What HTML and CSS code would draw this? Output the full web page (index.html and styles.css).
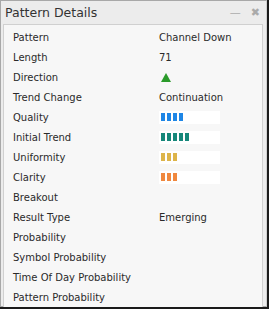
FILE: index.html
```html
<!DOCTYPE html>
<html lang="en">
<head>
	<meta charset="UTF-8">
	<title>Pattern Details</title>
	<link rel="stylesheet" href="styles.css">
</head>
<body>
<div class="window">
	<div class="titlebar">
		<span class="title">Pattern Details</span>
		<span class="btn min">&mdash;</span>
		<span class="btn close">&#x2716;</span>
	</div>
	<div class="panel">
		<div class="row"><span class="label">Pattern</span><span class="value">Channel Down</span></div>
		<div class="row"><span class="label">Length</span><span class="value">71</span></div>
		<div class="row"><span class="label">Direction</span><span class="value"><span class="arrow"></span></span></div>
		<div class="row"><span class="label">Trend Change</span><span class="value">Continuation</span></div>
		<div class="row"><span class="label">Quality</span><span class="value"><span class="bar blue"><i></i><i></i><i></i><i></i></span></span></div>
		<div class="row"><span class="label">Initial Trend</span><span class="value"><span class="bar teal"><i></i><i></i><i></i><i></i><i></i></span></span></div>
		<div class="row"><span class="label">Uniformity</span><span class="value"><span class="bar gold"><i></i><i></i><i></i></span></span></div>
		<div class="row"><span class="label">Clarity</span><span class="value"><span class="bar orange"><i></i><i></i><i></i></span></span></div>
		<div class="row"><span class="label">Breakout</span><span class="value"></span></div>
		<div class="row"><span class="label">Result Type</span><span class="value">Emerging</span></div>
		<div class="row"><span class="label">Probability</span><span class="value"></span></div>
		<div class="row"><span class="label">Symbol Probability</span><span class="value"></span></div>
		<div class="row"><span class="label">Time Of Day Probability</span><span class="value"></span></div>
		<div class="row"><span class="label">Pattern Probability</span><span class="value"></span></div>
	</div>
</div>
</body>
</html>
```

FILE: styles.css
```css
html, body {
	margin: 0;
	padding: 0;
	background: #1a1a1a;
}
.window {
	width: 267px;
	height: 307px;
	box-sizing: border-box;
	background: #ececec;
	border: 1px solid #a8a8a8;
	border-right-color: #cfcfcf;
	font-family: "DejaVu Sans", Verdana, sans-serif;
	color: #2a2a2a;
	display: flex;
	flex-direction: column;
}
.titlebar {
	height: 23px;
	flex: none;
	display: flex;
	align-items: center;
	padding: 0 6px 0 4px;
}
.title {
	flex: 1;
	font-size: 12.5px;
	color: #333;
}
.btn {
	color: #aaa;
	font-size: 11px;
	margin-left: 10px;
}
.panel {
	flex: 1;
	margin: 0 3px 1px 2px;
	background: #f7f7f7;
	border: 1px solid #d0d0d0;
	padding: 2px 0 0 9px;
}
.row {
	height: 20px;
	display: flex;
	align-items: center;
	font-size: 10px;
}
.label {
	width: 146px;
}
.value {
	display: flex;
	align-items: center;
}
.arrow {
	display: inline-block;
	margin-left: 2px;
	width: 0;
	height: 0;
	border-left: 5px solid transparent;
	border-right: 5px solid transparent;
	border-bottom: 9px solid #2a9a2a;
}
.bar {
	display: flex;
	gap: 2px;
	width: 59px;
	height: 13px;
	background: #fff;
	align-items: center;
	padding-left: 2px;
}
.bar i {
	width: 4px;
	height: 8px;
}
.blue i { background: #1e86e6; }
.teal i { background: #16877a; }
.gold i { background: #ddb44a; }
.orange i { background: #f0883e; }
```
